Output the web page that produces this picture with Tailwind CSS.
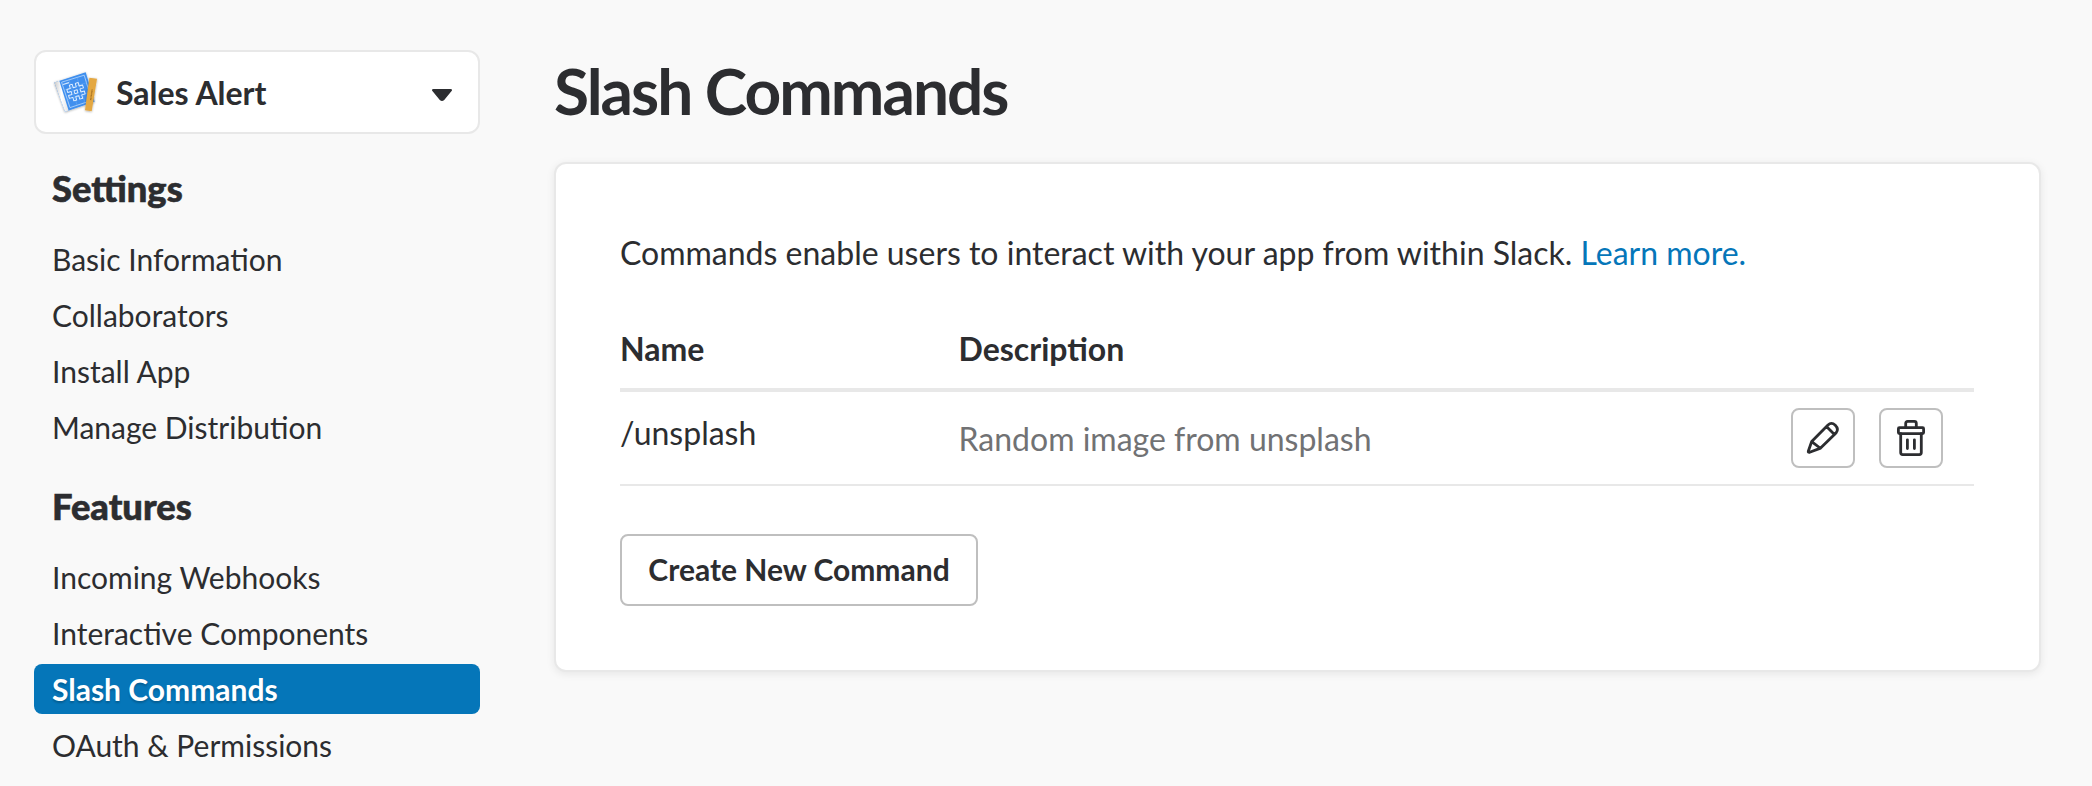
<!DOCTYPE html>
<html lang="en">
<head>
<meta charset="utf-8">
<title>Slash Commands</title>
<script src="https://cdn.jsdelivr.net/npm/@tailwindcss/browser@4"></script>
</head>
<body class="bg-[#f9f9f9] text-[#2c2d30] font-[Lato,sans-serif] text-[32px] leading-[48px] antialiased">
<div class="flex h-[786px] w-[2092px] overflow-hidden pl-[34px] pt-[50px]">
  <aside class="w-[446px] shrink-0">
    <button class="flex h-[84px] w-full items-center rounded-xl border-2 border-[#e8e8e8] bg-white pl-4 pr-[26px] font-bold">
      <svg class="h-12 w-12 shrink-0" viewBox="0 0 48 48" fill="none">
        <defs>
          <filter id="soft" x="-20%" y="-20%" width="140%" height="140%"><feDropShadow dx="0" dy="0.6" stdDeviation="1" flood-color="#000" flood-opacity=".35"/></filter>
          <linearGradient id="spine" x1="0" x2="1"><stop offset="0" stop-color="#c9c9c9"/><stop offset=".5" stop-color="#fff"/><stop offset="1" stop-color="#e4e4e4"/></linearGradient>
        </defs>
        <g filter="url(#soft)">
          <path d="M2.3 14.4 33.7 4.3 42.6 33.8 13 43.8Z" fill="#3f8fee"/>
          <path d="M2.3 14.4 7.3 12.8 16.6 42.4 13 43.8Z" fill="url(#spine)"/>
        </g>
        <path d="M9.6 14.2 32.2 7.2 39.8 32.4 18 39.6Z" stroke="#b9d9fc" stroke-width=".8"/>
        <path d="M12 22 35 14.5M15 32 38 24.5M17 12 25 37M25 9.5 33 34.500" stroke="#6badf4" stroke-width=".5"/>
        <path d="M11 16.500l6-1.800" stroke="#d5e8fd" stroke-width="1.300"/>
        <g transform="translate(24 23.700) rotate(-16)">
          <path d="M-4.600-8.200h3v3.600h3.200v-3.600h3v3.600h3.600v3h-3.600v3.200h3.600v3h-3.600v3.600h-3v-3.600h-3.200v3.600h-3v-3.600h-3.600v-3h3.600v-3.200h-3.600v-3h3.600ZM-1.600-1.600h3.200v3.200h-3.200Z" stroke="#e3f0ff" stroke-width=".95" stroke-linejoin="round"/>
        </g>
        <path d="M37.400 9.700 45 10.700 39.700 43.300 33 42.300Z" fill="#e4a843" filter="url(#soft)"/>
        <path d="M40.200 21.500 38.600 32.500" stroke="#a06c20" stroke-width="1.300" stroke-dasharray="1 .4"/>
      </svg>
      <span class="ml-4 pt-0.5">Sales Alert</span>
      <svg class="ml-auto mt-1.5 h-3 w-5" viewBox="0 0 20 12"><path d="M1.500 0h17Q21 .4 19.400 2.300L12.200 10.900Q10 13 7.800 10.900L.6 2.300Q-1 .4 1.500 0Z" fill="#2c2d30"/></svg>
    </button>

    <h2 class="mt-8 pl-[18px] text-[36.3px] leading-[44px] font-black [-webkit-text-stroke:0.6px_#2c2d30]">Settings</h2>
    <nav class="mt-6 flex flex-col gap-1.5 text-[30px] leading-[50px]">
      <a class="pl-[18px]">Basic Information</a>
      <a class="pl-[18px]">Collaborators</a>
      <a class="pl-[18px]">Install App</a>
      <a class="pl-[18px]">Manage Distribution</a>
    </nav>

    <h2 class="mt-8 pl-[18px] text-[36.3px] leading-[44px] font-black [-webkit-text-stroke:0.6px_#2c2d30]">Features</h2>
    <nav class="mt-6 flex flex-col gap-1.5 text-[30px] leading-[50px]">
      <a class="pl-[18px]">Incoming Webhooks</a>
      <a class="pl-[18px]">Interactive Components</a>
      <a class="rounded-lg bg-[#0576b9] pl-[18px] font-bold text-white [text-shadow:0_2px_2px_rgba(0,0,0,0.2)]">Slash Commands</a>
      <a class="pl-[18px]">OAuth &amp; Permissions</a>
    </nav>
  </aside>

  <main class="ml-[74px] w-[1487px] shrink-0 pt-[3px]">
    <h1 class="text-[64px] leading-[76px] font-bold tracking-[-2px]">Slash Commands</h1>
    <section class="mt-[33px] h-[510px] rounded-xl border-2 border-[#e8e8e8] bg-white px-16 pt-[65px] shadow-[0_2px_8px_rgba(0,0,0,0.08)]">
      <p>Commands enable users to interact with your app from within Slack. <a class="text-[#0576b9]">Learn more.</a></p>
      <div class="mt-[47px] w-[1354px]">
        <div class="grid h-[68px] grid-cols-4 border-b-4 border-[#e8e8e8] pt-px font-bold">
          <div>Name</div>
          <div>Description</div>
        </div>
        <div class="grid h-[94px] grid-cols-4 border-b-2 border-[#e8e8e8] pt-4">
          <div class="pt-px">/unsplash</div>
          <div class="col-span-2 pt-[7px] text-[#717274]">Random image from unsplash</div>
          <div class="flex justify-end gap-6 pr-[31px]">
            <button class="flex h-[60px] w-16 items-center justify-center rounded-lg border-2 border-[#bfbfbf] bg-white" aria-label="Edit">
              <svg class="h-10 w-10 shrink-0" viewBox="0 0 40 40" fill="none" stroke="#2c2d30" stroke-width="2.800" stroke-linejoin="round" stroke-linecap="round">
                <path d="M5.300 33.200 8.700 23.500 25 7Q28.500 3.600 32.300 7.300Q36.200 11.300 33 15L17.600 30.100 6.700 34.300Q4.900 34.600 5.300 33.200ZM9 23.800 17 30M23.700 8.800 31.500 16.500"/>
              </svg>
            </button>
            <button class="flex h-[60px] w-16 items-center justify-center rounded-lg border-2 border-[#bfbfbf] bg-white" aria-label="Delete">
              <svg class="h-10 w-10 shrink-0" viewBox="0 0 40 40" fill="none" stroke="#2c2d30" stroke-width="2.800" stroke-linejoin="round" stroke-linecap="round">
                <rect x="7.400" y="9.700" width="25.200" height="5.900" rx="1"/>
                <path d="M14.700 9.700V5.400q0-2 2-2h6.600q2 0 2 2v4.300M9.700 15.600V34.600q0 2 2 2h16.600q2 0 2-2v-19M16.400 21.800v8.800M23.400 21.800v8.800"/>
              </svg>
            </button>
          </div>
        </div>
      </div>
      <button class="mt-12 h-[72px] w-[358px] rounded-lg border-2 border-[#bfbfbf] bg-white pb-0.5 text-[30px] font-bold">Create New Command</button>
    </section>
  </main>
</div>
</body>
</html>
